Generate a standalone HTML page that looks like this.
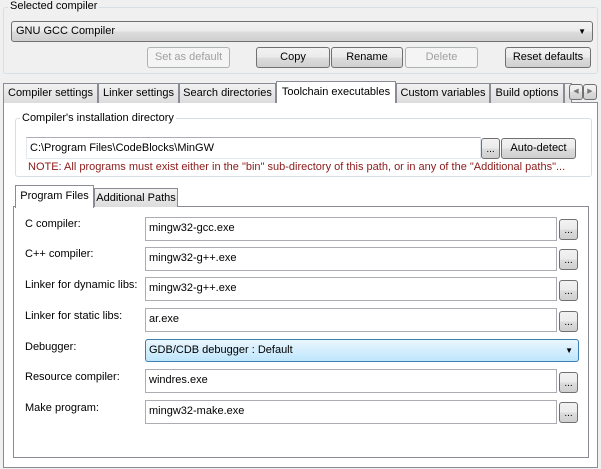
<!DOCTYPE html><html><head><style>
*{box-sizing:border-box}
body{margin:0;width:601px;height:469px;background:#f0f0f0;font-family:"Liberation Sans",Tahoma,sans-serif;font-size:11px;color:#000;position:relative;overflow:hidden}
.a{position:absolute}
.grp{position:absolute;border:1px solid #d5dfe5;border-radius:3px}
.lbl{position:absolute;background:#f0f0f0;padding:0 2px;line-height:13px}
.btn{position:absolute;border:1px solid #707070;border-radius:3px;background:linear-gradient(#f2f2f2 0%,#ebebeb 50%,#dddddd 51%,#cfcfcf 100%);text-align:center;line-height:18px}
.dis{border-color:#adb2b5;color:#a0a0a0;background:#f4f4f4}
.fld{position:absolute;background:#fff;border:1px solid #abadb3;border-top-color:#abadb3;padding-left:3px;line-height:21px}
.tab{position:absolute;border:1px solid #898c95;border-bottom:none;background:linear-gradient(#f2f2f2,#dcdcdc);text-align:center;line-height:18px;top:83px;height:20px}
.sm{width:19px;height:21px;line-height:22px;font-size:10px}
.rl{position:absolute;left:25px}
</style></head><body>
<div class="grp" style="left:3px;top:7px;width:595px;height:67px"></div>
<div class="lbl" style="left:8px;top:0px">Selected compiler</div>
<div class="btn" style="left:11px;top:21px;width:582px;height:21px;text-align:left;padding-left:4px;line-height:19px">GNU GCC Compiler<span class="a" style="right:6px;top:0;font-size:8px">▼</span></div>
<div class="btn dis" style="left:147px;top:47px;width:83px;height:21px">Set as default</div>
<div class="btn" style="left:256px;top:47px;width:74px;height:21px">Copy</div>
<div class="btn" style="left:331px;top:47px;width:72px;height:21px">Rename</div>
<div class="btn dis" style="left:405px;top:47px;width:73px;height:21px">Delete</div>
<div class="btn" style="left:505px;top:47px;width:86px;height:21px">Reset defaults</div>

<div class="a" style="left:3px;top:102px;width:595px;height:366px;border:1px solid #898c95;background:#fff"></div>
<div class="tab" style="left:3px;width:95px">Compiler settings</div>
<div class="tab" style="left:98px;width:81px">Linker settings</div>
<div class="tab" style="left:179px;width:97px">Search directories</div>
<div class="tab" style="left:396px;width:94px">Custom variables</div>
<div class="tab" style="left:490px;width:74px">Build options</div>
<div class="tab" style="left:564px;width:8px"></div>
<div class="btn" style="left:569px;top:84px;width:14px;height:16px;font-size:7px;line-height:14px;color:#777">◀</div>
<div class="btn" style="left:583px;top:84px;width:14px;height:16px;font-size:7px;line-height:14px;color:#777">▶</div>
<div class="a" style="left:276px;top:81px;width:120px;height:23px;border:1px solid #898c95;border-bottom:none;background:#fff;text-align:center;line-height:20px">Toolchain executables</div>

<div class="a" style="left:4px;top:103px;width:593px;height:364px;background:#fff">
<div class="grp" style="left:11px;top:15px;width:577px;height:59px"></div>
<div class="lbl" style="left:16px;top:9px;background:#fff">Compiler's installation directory</div>
<div class="fld" style="left:22px;top:34px;width:455px;height:22px;border-color:#e3e9ef;border-top-color:#abadb3">C:\Program Files\CodeBlocks\MinGW</div>
<div class="btn sm" style="left:477px;top:35px">...</div>
<div class="btn" style="left:497px;top:35px;width:75px;height:21px">Auto-detect</div>
<div class="a" style="left:24px;top:58px;color:#8b1a1a;line-height:13px">NOTE: All programs must exist either in the "bin" sub-directory of this path, or in any of the "Additional paths"...</div>
</div>

<div class="a" style="left:13px;top:206px;width:576px;height:252px;border:1px solid #898c95;background:#fff"></div>
<div class="tab" style="left:94px;top:188px;width:84px;height:19px;line-height:18px">Additional Paths</div>
<div class="a" style="left:15px;top:185px;width:79px;height:23px;border:1px solid #898c95;border-bottom:none;background:#fff;text-align:center;line-height:21px">Program Files</div>

<div class="rl" style="top:218px">C compiler:</div>
<div class="fld" style="left:145px;top:217px;width:412px;height:24px">mingw32-gcc.exe</div>
<div class="btn sm" style="left:559px;top:219px">...</div>
<div class="rl" style="top:248px">C++ compiler:</div>
<div class="fld" style="left:145px;top:247px;width:412px;height:24px">mingw32-g++.exe</div>
<div class="btn sm" style="left:559px;top:249px">...</div>
<div class="rl" style="top:279px">Linker for dynamic libs:</div>
<div class="fld" style="left:145px;top:277px;width:412px;height:24px">mingw32-g++.exe</div>
<div class="btn sm" style="left:559px;top:280px">...</div>
<div class="rl" style="top:310px">Linker for static libs:</div>
<div class="fld" style="left:145px;top:308px;width:412px;height:24px">ar.exe</div>
<div class="btn sm" style="left:559px;top:311px">...</div>
<div class="rl" style="top:341px">Debugger:</div>
<div class="a" style="left:145px;top:339px;width:434px;height:23px;border:1px solid #3c7fb1;border-radius:3px;background:linear-gradient(#eaf6fd,#bee6fd);padding-left:3px;line-height:21px">GDB/CDB debugger : Default<span class="a" style="right:5px;top:0;font-size:8px">▼</span></div>
<div class="rl" style="top:371px">Resource compiler:</div>
<div class="fld" style="left:145px;top:369px;width:412px;height:24px">windres.exe</div>
<div class="btn sm" style="left:559px;top:372px">...</div>
<div class="rl" style="top:402px">Make program:</div>
<div class="fld" style="left:145px;top:400px;width:412px;height:24px">mingw32-make.exe</div>
<div class="btn sm" style="left:559px;top:402px">...</div>
</body></html>
